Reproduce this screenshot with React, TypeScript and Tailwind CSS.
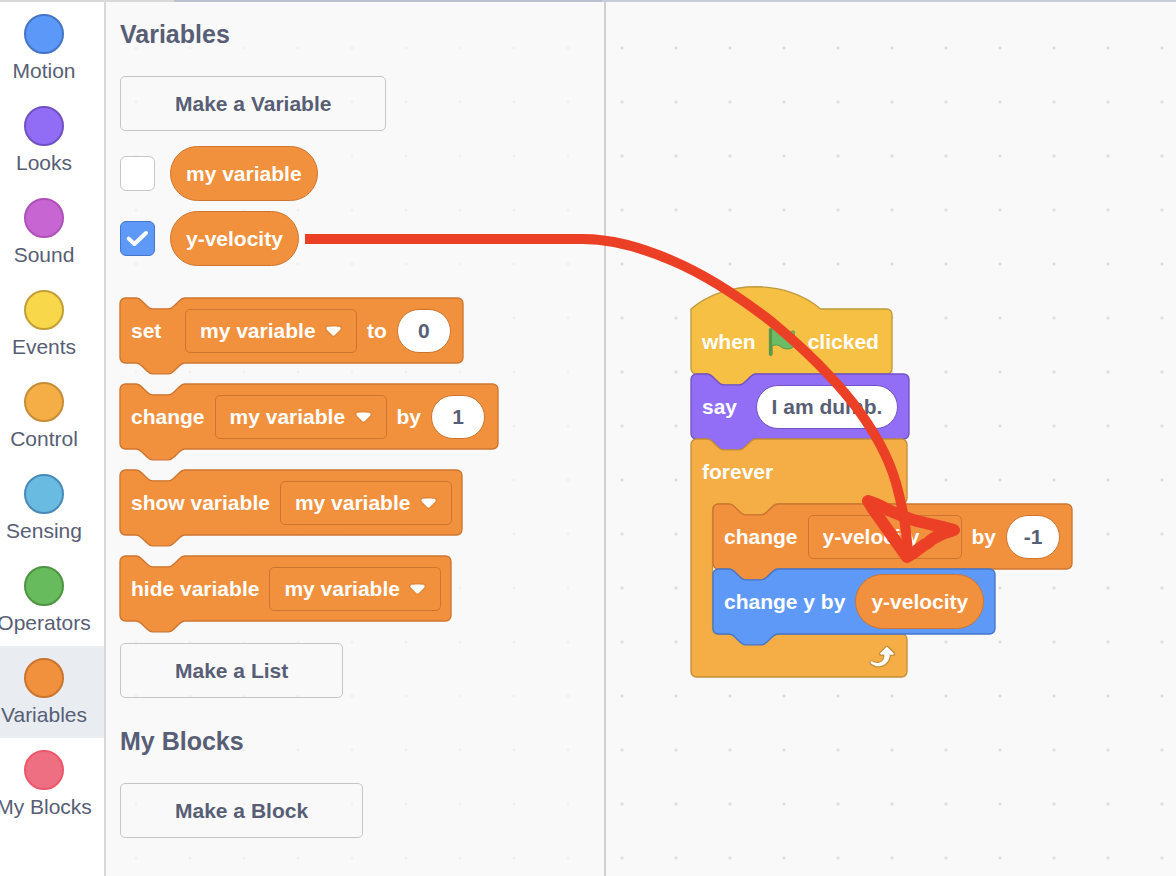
import React, { useState } from "react";

type Tone = "motion" | "looks" | "events" | "control" | "variables";

const SCALE = 1.35;

const tones: Record<Tone, { shape: string; border: string }> = {
  motion: { shape: "fill-[#5e99f7] stroke-[#4576c9]", border: "border-[#4576c9]" },
  looks: { shape: "fill-[#926ef6] stroke-[#7052c4]", border: "border-[#7052c4]" },
  events: { shape: "fill-[#f5c044] stroke-[#bf9a3c]", border: "border-[#bf9a3c]" },
  control: { shape: "fill-[#f4ae45] stroke-[#c48f3a]", border: "border-[#c48f3a]" },
  variables: { shape: "fill-[#f1913d] stroke-[#cd7530]", border: "border-[#cd7530]" },
};

const categories = [
  { name: "Motion", dot: "bg-[#5c98f7] border-[#4474c6]" },
  { name: "Looks", dot: "bg-[#916df5] border-[#7050c2]" },
  { name: "Sound", dot: "bg-[#c765d2] border-[#ae50b8]" },
  { name: "Events", dot: "bg-[#f8d74a] border-[#c39e36]" },
  { name: "Control", dot: "bg-[#f4ae45] border-[#c68c36]" },
  { name: "Sensing", dot: "bg-[#69bbe2] border-[#468ab8]" },
  { name: "Operators", dot: "bg-[#67bb5c] border-[#4d9442]" },
  { name: "Variables", dot: "bg-[#f1913d] border-[#cb7430]" },
  { name: "My Blocks", dot: "bg-[#ee6f82] border-[#eb566a]" },
];

const NOTCH = "c2,0 3,1 4,2 l4,4 c1,1 2,2 4,2 h12 c2,0 3,-1 4,-2 l4,-4 c1,-1 2,-2 4,-2";
const TAB = "c-2,0 -3,1 -4,2 l-4,4 c-1,1 -2,2 -4,2 h-12 c-2,0 -3,-1 -4,-2 l-4,-4 c-1,-1 -2,-2 -4,-2";

function stackPath(w: number, h: number) {
  return `M0,4 a4,4 0 0 1 4,-4 H12 ${NOTCH} H${w - 4} a4,4 0 0 1 4,4 V${h - 4} a4,4 0 0 1 -4,4 H48 ${TAB} H4 a4,4 0 0 1 -4,-4 z`;
}

function hatPath(w: number, h: number) {
  return `M0,0 c25,-22 71,-22 96,0 H${w - 4} a4,4 0 0 1 4,4 V${h - 4} a4,4 0 0 1 -4,4 H48 ${TAB} H4 a4,4 0 0 1 -4,-4 z`;
}

function loopPath(w: number, head: number, mouth: number, foot: number) {
  const total = head + mouth + foot;
  return `M0,4 a4,4 0 0 1 4,-4 H12 ${NOTCH} H${w - 4} a4,4 0 0 1 4,4 V${head - 4} a4,4 0 0 1 -4,4 H64 ${TAB} h-8 a4,4 0 0 0 -4,4 V${head + mouth - 4} a4,4 0 0 0 4,4 H${w - 4} a4,4 0 0 1 4,4 V${total - 4} a4,4 0 0 1 -4,4 H4 a4,4 0 0 1 -4,-4 z`;
}

function Shape({ d, tone }: { d: string; tone: Tone }) {
  return (
    <svg aria-hidden="true" className="pointer-events-none absolute inset-0 h-full w-full overflow-visible">
      <path d={d} transform={`scale(${SCALE})`} className={tones[tone].shape} />
    </svg>
  );
}

function Block({
  tone,
  width,
  hat = false,
  children,
}: {
  tone: Tone;
  width: number;
  hat?: boolean;
  children: React.ReactNode;
}) {
  const path = hat ? hatPath : stackPath;
  return (
    <div className="relative h-[65px]" style={{ width }}>
      <Shape d={path(width / SCALE, 65 / SCALE)} tone={tone} />
      <div className="relative flex h-full items-center gap-2.5 px-[11px]">{children}</div>
    </div>
  );
}

function Word({ children, lead = false }: { children: React.ReactNode; lead?: boolean }) {
  return <span className={lead ? "min-w-11 whitespace-nowrap" : "whitespace-nowrap"}>{children}</span>;
}

function VariableSelect({ value, className = "w-[172px]" }: { value: string; className?: string }) {
  const [picked, setPicked] = useState(value);
  return (
    <span className={`relative shrink-0 ${className}`}>
      <select
        aria-label="Variable"
        value={picked}
        onChange={(e) => setPicked(e.target.value)}
        className="block h-11 w-full appearance-none rounded-[5px] border border-[#cd7530] bg-transparent pl-3.5 font-bold text-white outline-none"
      >
        <option>my variable</option>
        <option>y-velocity</option>
      </select>
      <svg
        aria-hidden="true"
        viewBox="0 0 12.71 8.79"
        className="pointer-events-none absolute right-[15px] top-4 h-3 w-[17px]"
      >
        <path
          className="fill-[#cd7530] opacity-40"
          d="M12.71,2.44A2.41,2.41,0,0,1,12,4.16L8.08,8.08a2.45,2.45,0,0,1-3.45,0L.72,4.16A2.42,2.42,0,0,1,0,2.44,2.48,2.48,0,0,1,.71.71C1,.47,1.43,0,6.36,0S11.75.46,12,.71A2.44,2.44,0,0,1,12.71,2.44Z"
        />
        <path
          className="fill-white"
          d="M6.36,7.79a1.43,1.43,0,0,1-1-.42L1.42,3.45a1.44,1.44,0,0,1,0-2c.56-.56,9.31-.56,9.87,0a1.44,1.44,0,0,1,0,2L7.37,7.37A1.43,1.43,0,0,1,6.36,7.79Z"
        />
      </svg>
    </span>
  );
}

function Field({
  label,
  value,
  tone = "variables",
  className = "w-[54px]",
}: {
  label: string;
  value: string;
  tone?: Tone;
  className?: string;
}) {
  return (
    <input
      type="text"
      aria-label={label}
      defaultValue={value}
      className={`h-11 shrink-0 rounded-full border bg-white text-center font-bold text-[#575e75] outline-none ${tones[tone].border} ${className}`}
    />
  );
}

const pill =
  "flex h-[55px] shrink-0 items-center whitespace-nowrap rounded-full border border-[#cd7530] bg-[#f1913d] px-[15px] font-bold text-white";

function Reporter({ id, name, initial }: { id: string; name: string; initial: boolean }) {
  return (
    <div className="flex items-center gap-[15px]">
      <span className="relative h-[35px] w-[35px]">
        <input
          id={id}
          type="checkbox"
          defaultChecked={initial}
          className="peer block h-full w-full appearance-none rounded-md border border-[#c6c6c6] bg-white checked:border-[#4576c9] checked:bg-[#5e99f7]"
        />
        <svg
          aria-hidden="true"
          viewBox="0 0 35 35"
          className="pointer-events-none absolute inset-0 hidden h-full w-full fill-none stroke-white stroke-4 peer-checked:block"
        >
          <path d="M8.7 17.6 L14.4 23 L26 12" strokeLinecap="round" strokeLinejoin="round" />
        </svg>
      </span>
      <label htmlFor={id} className={pill}>
        {name}
      </label>
    </div>
  );
}

function PaletteButton({ children, className = "" }: { children: React.ReactNode; className?: string }) {
  return (
    <button
      type="button"
      className={`h-[55px] whitespace-nowrap rounded-[5px] border border-[#c6c6c6] px-[54px] font-bold text-[#575e75] ${className}`}
    >
      {children}
    </button>
  );
}

function Flag() {
  return (
    <svg aria-hidden="true" viewBox="0 0 24 24" className="h-8 w-8 shrink-0">
      <path
        className="fill-[#6bbc65] stroke-[#56954a]"
        strokeWidth="0.7"
        strokeLinejoin="round"
        d="M20.8 3.7c-.4-.2-.9-.1-1.2.2-2 1.6-4.8 1.6-6.8 0-2.3-1.9-5.6-2.3-8.3-1v-.4c0-.6-.5-1-1-1s-1 .4-1 1v18.8c0 .5.5 1 1 1h.1c.5 0 1-.4 1-1v-6.4c2.1-1.2 4.7-.9 6.5.6 2.9 2.3 6.9 2.3 9.8 0 .2-.2.3-.4.3-.7V4.5c0-.4-.1-.6-.4-.8z"
      />
      <path className="fill-[#56954a]" d="M2.6 2.4h1.9v19.2H2.6z" />
    </svg>
  );
}

function RepeatArrow() {
  return (
    <svg aria-hidden="true" viewBox="0 0 24 24" className="h-8 w-8">
      <path
        className="fill-[#c48f3a]"
        d="M23.3,11c-.3.6-.9,1-1.5,1h-1.6c-.1,1.3-.5,2.5-1.1,3.6c-.9,1.7-2.3,3.2-4.1,4.1c-1.7.9-3.6,1.2-5.5.9c-1.8-.3-3.5-1.1-4.9-2.3c-.7-.7-.7-1.9,0-2.6c.6-.6,1.6-.7,2.3-.2H7c.9.6,1.9.9,2.9.9s1.9-.3,2.7-.9c1.1-.8,1.8-2.1,1.8-3.5h-1.5c-.9,0-1.7-.7-1.7-1.7c0-.4.2-.9.5-1.2l4.4-4.4c.7-.6,1.7-.6,2.4,0L23,9.2C23.5,9.7,23.6,10.4,23.3,11z"
      />
      <path
        className="fill-white"
        d="M21.8,11h-2.6c0,1.5-.3,2.9-1,4.2c-.8,1.6-2.1,2.8-3.7,3.6c-1.5.8-3.3,1.1-4.9.8c-1.6-.2-3.2-1-4.4-2.1c-.4-.3-.4-.9-.1-1.2c.3-.4.9-.4,1.2-.1c1,.7,2.2,1.1,3.4,1.1s2.3-.3,3.3-1c.9-.6,1.6-1.5,2-2.6c.3-.9.4-1.8.2-2.8h-2.4c-.4,0-.7-.3-.7-.7c0-.2.1-.3.2-.4l4.4-4.4c.3-.3.7-.3.9,0L22,9.8c.3.3.4.6.3.9S22,11,21.8,11z"
      />
    </svg>
  );
}

function Annotation() {
  return (
    <svg
      aria-hidden="true"
      viewBox="0 0 1176 876"
      className="pointer-events-none absolute left-0 top-0 h-[876px] w-[1176px] fill-none stroke-[#ec4026]"
    >
      <path
        strokeWidth="10"
        d="M305,239 H583 C612,239 641,247 673,261 C708,276 741,298 773,323 C802,347 830,374 853,403 C873,429 888,455 896,483 C903,508 907,532 908,556"
      />
      <path
        strokeWidth="12"
        strokeLinejoin="round"
        strokeLinecap="round"
        d="M868,501 L873,509 L907,557 C918,551 922,545 928,543 C933,537 944,533 954,530 C940,526 928,524 917,521 C910,519 904,517 898,514 C890,512 882,505 868,501 Z"
      />
    </svg>
  );
}

export default function App() {
  const [selected, setSelected] = useState("Variables");
  return (
    <div className="relative flex min-h-screen flex-col overflow-hidden bg-white font-['Liberation_Sans',Arial,sans-serif] text-[21px] leading-6 text-[#575e75]">
      <div className="flex h-0.5">
        <div className="w-[174px] bg-[#d9d9d9]" />
        <div className="w-[428px] bg-[#bcc0d1]" />
        <div className="flex-1 bg-[#c8ccda]" />
      </div>
      <div className="flex flex-1">
        <nav className="w-[106px] shrink-0 border-r-2 border-[#d9d9d9] bg-white">
          {categories.map((c) => (
            <button
              key={c.name}
              type="button"
              onClick={() => setSelected(c.name)}
              className={`flex h-[92px] w-full flex-col items-center gap-[5px] whitespace-nowrap pr-4 pt-3 ${
                selected === c.name ? "bg-[#e9edf2]" : ""
              }`}
            >
              <span className={`h-10 w-10 shrink-0 rounded-full border-2 ${c.dot}`} />
              <span>{c.name}</span>
            </button>
          ))}
        </nav>

        <section className="flex w-[500px] shrink-0 flex-col items-start border-r-2 border-[#d0d0d0] bg-[#f9f9f9] bg-[radial-gradient(circle_at_2px_2px,#f1f1f1_1px,transparent_2px)] bg-[length:54px_54px] bg-[position:28px_44px] pl-3.5 pt-[18px]">
          <h2 className="text-[25px] font-bold leading-7">Variables</h2>
          <PaletteButton className="mt-7">Make a Variable</PaletteButton>
          <div className="mt-[15px] flex flex-col gap-2.5">
            <Reporter id="my-variable" name="my variable" initial={false} />
            <Reporter id="y-velocity" name="y-velocity" initial={true} />
          </div>
          <div className="mt-8 flex flex-col gap-[21px] font-bold text-white">
            <Block tone="variables" width={343}>
              <Word lead>set</Word>
              <VariableSelect value="my variable" />
              <Word>to</Word>
              <Field label="Value" value="0" />
            </Block>
            <Block tone="variables" width={378}>
              <Word>change</Word>
              <VariableSelect value="my variable" />
              <Word>by</Word>
              <Field label="Amount" value="1" />
            </Block>
            <Block tone="variables" width={342}>
              <Word>show variable</Word>
              <VariableSelect value="my variable" />
            </Block>
            <Block tone="variables" width={331}>
              <Word>hide variable</Word>
              <VariableSelect value="my variable" />
            </Block>
          </div>
          <PaletteButton className="mt-[22px]">Make a List</PaletteButton>
          <h2 className="mt-[29px] text-[25px] font-bold leading-7">My Blocks</h2>
          <PaletteButton className="mt-7">Make a Block</PaletteButton>
        </section>

        <main className="relative min-w-0 flex-1 bg-[#f9f9f9] bg-[radial-gradient(circle_at_2px_2px,#dcdcdc_1px,transparent_2px)] bg-[length:54px_54px] bg-[position:14px_44px]">
          <div className="absolute left-[85px] top-[307px] font-bold text-white">
            <Block tone="events" width={201} hat>
              <Word>when</Word>
              <Flag />
              <Word>clicked</Word>
            </Block>
            <Block tone="looks" width={218}>
              <Word lead>say</Word>
              <Field label="Message" value="I am dumb." tone="looks" className="w-[142px]" />
            </Block>
            <div className="relative w-[216px]">
              <Shape d={loopPath(160, 65 / SCALE, 130 / SCALE, 43 / SCALE)} tone="control" />
              <div className="relative flex h-[65px] items-center px-[11px]">
                <Word>forever</Word>
              </div>
              <div className="pl-[22px]">
                <Block tone="variables" width={359}>
                  <Word>change</Word>
                  <VariableSelect value="y-velocity" className="w-[154px]" />
                  <Word>by</Word>
                  <Field label="Amount" value="-1" />
                </Block>
                <Block tone="motion" width={282}>
                  <Word>change y by</Word>
                  <span className={pill}>y-velocity</span>
                </Block>
              </div>
              <div className="relative flex h-[43px] items-center justify-end pr-[11px]">
                <RepeatArrow />
              </div>
            </div>
          </div>
        </main>
      </div>
      <Annotation />
    </div>
  );
}
